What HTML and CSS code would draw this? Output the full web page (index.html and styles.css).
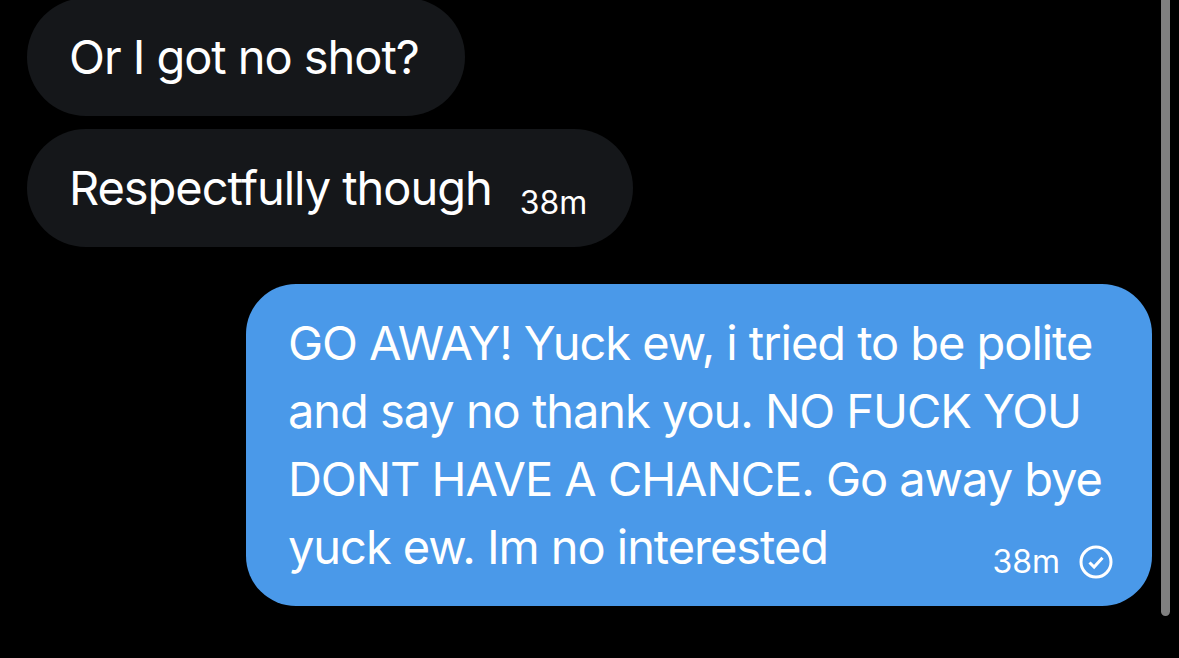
FILE: index.html
```html
<!doctype html>
<html>
<head>
<title>Messages</title>
<link rel="stylesheet" href="styles.css">
</head>
<body>
<div class="thread">
	<div class="msg in first">Or I got no shot?</div>
	<div class="msg in second">
		<span>Respectfully though</span>
		<span class="time">38m</span>
	</div>
	<div class="msg out">
		<div>GO AWAY! Yuck ew, i tried to be polite</div>
		<div>and say no thank you. NO FUCK YOU</div>
		<div>DONT HAVE A CHANCE. Go away bye</div>
		<div class="lastline">
			<span>yuck ew. Im no interested</span>
			<span class="meta">
				<span class="time">38m</span>
				<svg class="check" viewBox="0 0 34 34" width="34" height="34">
					<circle cx="17" cy="17" r="15" fill="none" stroke="#fff" stroke-width="3"/>
					<path d="M10.5 17.5l4.6 4.6 8.4-9.4" fill="none" stroke="#fff" stroke-width="3"/>
				</svg>
			</span>
		</div>
	</div>
</div>
<div class="scrollbar"></div>
</body>
</html>
```

FILE: styles.css
```css
html,body{
margin:0;
height:100%;
overflow:hidden;
background-color:#000;
}
body{
color:#fff;
font-family:"Inter","Liberation Sans",sans-serif;
font-size:47px;
font-weight:370;
letter-spacing:-1.05px;
line-height:68px;
}
.thread{
display:flex;
flex-direction:column;
align-items:flex-start;
margin-top:-2px;
padding:0 27px;
}
.msg{
padding:25px 43px 25px 42px;
white-space:nowrap;
}
.in{
background-color:#15171a;
border-radius:59px;
}
.first{
width:353px;
margin-bottom:13px;
}
.second{
display:flex;
align-items:flex-end;
width:521px;
gap:28px;
}
.out{
align-self:flex-end;
box-sizing:border-box;
width:906px;
margin-top:37px;
background-color:#4a99e9;
border-radius:50px;
}
.lastline{
display:flex;
justify-content:space-between;
align-items:flex-end;
}
.time{
font-size:32px;
font-weight:400;
letter-spacing:0;
line-height:32px;
margin-bottom:3px;
}
.meta{
display:flex;
align-items:flex-end;
gap:19px;
margin-right:-4px;
}
.check{
display:block;
margin-bottom:2px;
}
.scrollbar{
position:absolute;
top:0;
left:1161px;
width:9px;
height:616px;
background-color:#808080;
border-radius:0 0 5px 5px;
}
```
